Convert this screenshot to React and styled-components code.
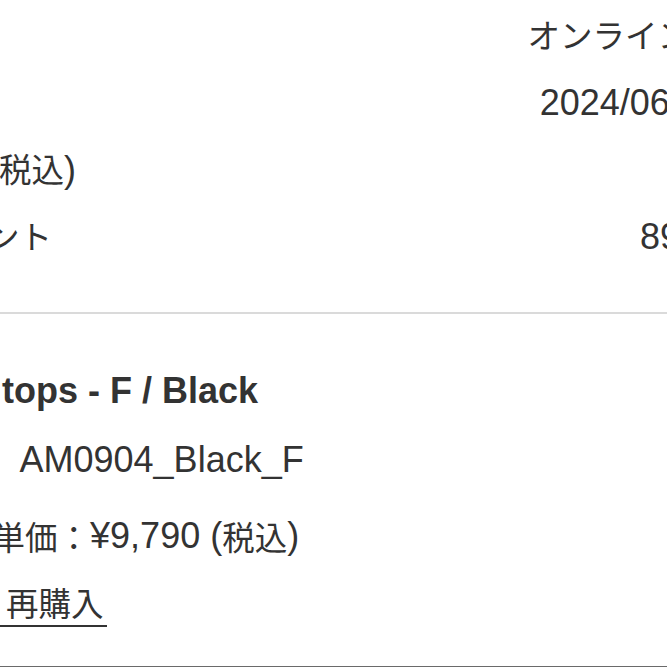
import React from "react";
import styled, { createGlobalStyle } from "styled-components";

const GlobalStyle = createGlobalStyle`
  html, body {
    margin: 0;
    padding: 0;
    background: #ffffff;
    overflow: hidden;
  }
  body {
    width: 667px;
    height: 667px;
    font-family: "Liberation Sans", Arial, "Noto Sans CJK JP", sans-serif;
    color: #333333;
  }
`;

const Page = styled.div`
  width: 898px;
  margin-left: -78px;
  font-size: 36px;
  line-height: 1;
`;

const Jp = styled.span`
  font-family: "Noto Sans CJK JP", sans-serif;
  font-size: 32.5px;
`;

const CJK = /([\u3000-\u30ff\u4e00-\u9fff\uff00-\uffef]+)/;

function T({ children }) {
  return String(children)
    .split(CJK)
    .filter(Boolean)
    .map((part, i) => (CJK.test(part) ? <Jp key={i}>{part}</Jp> : <React.Fragment key={i}>{part}</React.Fragment>));
}

const Summary = styled.section`
  display: flex;
  flex-direction: column;
  padding: 2px 0 42px;
  border-bottom: 2px solid #dadada;
`;

const SummaryRow = styled.div`
  display: flex;
  align-items: center;
  justify-content: space-between;
  height: 67px;
`;

const Label = styled.span`
  white-space: nowrap;
`;

const Value = styled.span`
  white-space: pre;
  text-align: right;
`;

const Item = styled.section`
  display: flex;
  flex-direction: column;
  align-items: flex-start;
  padding-top: 43px;
`;

const ItemLine = styled.div`
  display: flex;
  align-items: center;
  height: ${(p) => p.$h || 68}px;
  margin-top: ${(p) => p.$mt || 0}px;
  font-weight: ${(p) => (p.$bold ? 700 : 400)};
  white-space: pre;
`;

const Qty = styled.span`
  margin-right: 18px;
`;

const Rebuy = styled.a`
  display: inline-flex;
  align-items: center;
  gap: 22px;
  margin-top: 16px;
  margin-left: 30px;
  padding: 0 3px 6px 0;
  color: #333333;
  text-decoration: none;
  border-bottom: 2px solid #333333;
  white-space: nowrap;
`;

const NextBox = styled.div`
  margin-top: 39px;
  height: 60px;
  border: 2px solid #6a6a6a;
`;

function RefreshIcon() {
  return (
    <svg width="32" height="32" viewBox="0 0 24 24" fill="none" stroke="#333" strokeWidth="2" strokeLinecap="round" strokeLinejoin="round">
      <path d="M3 12a9 9 0 1 0 3-6.7L3 8" />
      <path d="M3 3v5h5" />
    </svg>
  );
}

const summary = [
  { label: "店舗", value: "オンラインショップ" },
  { label: "日時", value: "2024/06/15 12:34" },
  { label: "合計(税込)", value: "¥9,790" },
  { label: "ポイント", value: "89 ポイント" },
];

export default function App() {
  return (
    <>
      <GlobalStyle />
      <Page>
        <Summary>
          {summary.map((r) => (
            <SummaryRow key={r.label}>
              <Label><T>{r.label}</T></Label>
              <Value><T>{r.value}</T></Value>
            </SummaryRow>
          ))}
        </Summary>
        <Item>
          <ItemLine $bold $h={67}>Knit tops - F / Black</ItemLine>
          <ItemLine $mt={2}><T>品番　AM0904_Black_F</T></ItemLine>
          <ItemLine $mt={8}>
            <Qty><T>1点</T></Qty>
            <T>単価：¥9,790 (税込)</T>
          </ItemLine>
          <Rebuy href="#">
            <RefreshIcon />
            <T>再購入</T>
          </Rebuy>
        </Item>
        <NextBox />
      </Page>
    </>
  );
}
